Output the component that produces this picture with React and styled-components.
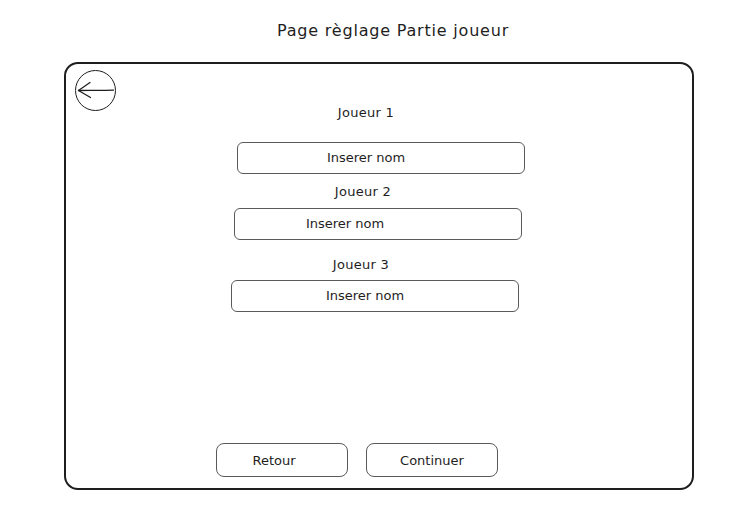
import React from "react";
import styled, { createGlobalStyle } from "styled-components";

const GlobalStyle = createGlobalStyle`
  html, body {
    margin: 0;
    padding: 0;
    background: #ffffff;
  }
  body {
    font-family: "DejaVu Sans", "Liberation Sans", sans-serif;
    color: #1e1e1e;
  }
`;

const players = [
  { label: "Joueur 1", labelShift: -13, boxShift: 2, textShift: -15, gapTop: 0, boxGap: 21 },
  { label: "Joueur 2", labelShift: -16, boxShift: -1, textShift: -33, gapTop: 10, boxGap: 8 },
  { label: "Joueur 3", labelShift: -18, boxShift: -4, textShift: -10, gapTop: 17, boxGap: 7 },
];

const BackArrow = () => (
  <svg width="41" height="41" viewBox="0 0 41 41" fill="none">
    <path
      d="M3.5 20.5 C14 20.3 26 20.6 38.5 20.2"
      stroke="#1e1e1e"
      strokeWidth="1.3"
      strokeLinecap="round"
    />
    <path
      d="M15 12.5 L3.5 20.5 L15.5 27.5"
      stroke="#1e1e1e"
      strokeWidth="1.3"
      strokeLinecap="round"
      strokeLinejoin="round"
    />
  </svg>
);

const App = () => {
  return (
    <Page>
      <GlobalStyle />
      <Title>Page règlage Partie joueur</Title>
      <Frame>
        <BackButton aria-label="Retour">
          <BackArrow />
        </BackButton>
        <Main>
          {players.map((p) => (
            <React.Fragment key={p.label}>
              <Label $shift={p.labelShift} $top={p.gapTop}>
                {p.label}
              </Label>
              <NameBox $shift={p.boxShift} $top={p.boxGap}>
                <NameText $shift={p.textShift}>Inserer nom</NameText>
              </NameBox>
            </React.Fragment>
          ))}
          <Actions>
            <ActionButton $textShift={-8}>
              <span>Retour</span>
            </ActionButton>
            <ActionButton $textShift={0}>
              <span>Continuer</span>
            </ActionButton>
          </Actions>
        </Main>
      </Frame>
    </Page>
  );
};

export default App;

// Styles //
const Page = styled.div`
  width: 753px;
  height: 529px;
  padding-top: 21px;
  box-sizing: border-box;
  overflow: hidden;
`;

const Title = styled.h1`
  margin: 0 0 21px 33px;
  font-size: 16px;
  line-height: 20px;
  font-weight: normal;
  letter-spacing: 0.8px;
  text-align: center;
`;

const Frame = styled.div`
  box-sizing: border-box;
  margin-left: 64px;
  width: 630px;
  height: 428px;
  border: 2px solid #1e1e1e;
  border-radius: 14px;
  padding: 6px 9px;
  display: grid;
  grid-template-columns: 50px 1fr 50px;
  grid-template-rows: 1fr;
`;

const BackButton = styled.div`
  grid-column: 1;
  grid-row: 1;
  align-self: start;
  justify-self: start;
  width: 41px;
  height: 41px;
  box-sizing: border-box;
  border: 1.3px solid #1e1e1e;
  border-radius: 50%;
  position: relative;

  svg {
    position: absolute;
    left: -1px;
    top: -1px;
  }
`;

const Main = styled.div`
  grid-column: 2;
  grid-row: 1;
  display: flex;
  flex-direction: column;
  align-items: center;
  padding: 35px 0 5px;
`;

const Label = styled.div`
  font-size: 13px;
  line-height: 16px;
  letter-spacing: 0.3px;
  margin-top: ${(p) => p.$top}px;
  margin-left: ${(p) => (p.$shift > 0 ? p.$shift * 2 : 0)}px;
  margin-right: ${(p) => (p.$shift < 0 ? -p.$shift * 2 : 0)}px;
`;

const NameBox = styled.div`
  box-sizing: border-box;
  width: 288px;
  height: 32px;
  margin-top: ${(p) => p.$top}px;
  margin-left: ${(p) => (p.$shift > 0 ? p.$shift * 2 : 0)}px;
  margin-right: ${(p) => (p.$shift < 0 ? -p.$shift * 2 : 0)}px;
  border: 1px solid #5a5a5a;
  border-radius: 6px;
  display: flex;
  align-items: center;
  justify-content: center;
`;

const NameText = styled.span`
  font-size: 13px;
  line-height: 16px;
  margin-left: ${(p) => (p.$shift > 0 ? p.$shift * 2 : 0)}px;
  margin-right: ${(p) => (p.$shift < 0 ? -p.$shift * 2 : 0)}px;
`;

const Actions = styled.div`
  margin-top: auto;
  margin-right: 44px;
  display: flex;
  gap: 18px;
`;

const ActionButton = styled.div`
  box-sizing: border-box;
  width: 132px;
  height: 34px;
  border: 1px solid #5a5a5a;
  border-radius: 8px;
  display: flex;
  align-items: center;
  justify-content: center;
  font-size: 13px;

  span {
    margin-right: ${(p) => -p.$textShift * 2}px;
  }
`;
